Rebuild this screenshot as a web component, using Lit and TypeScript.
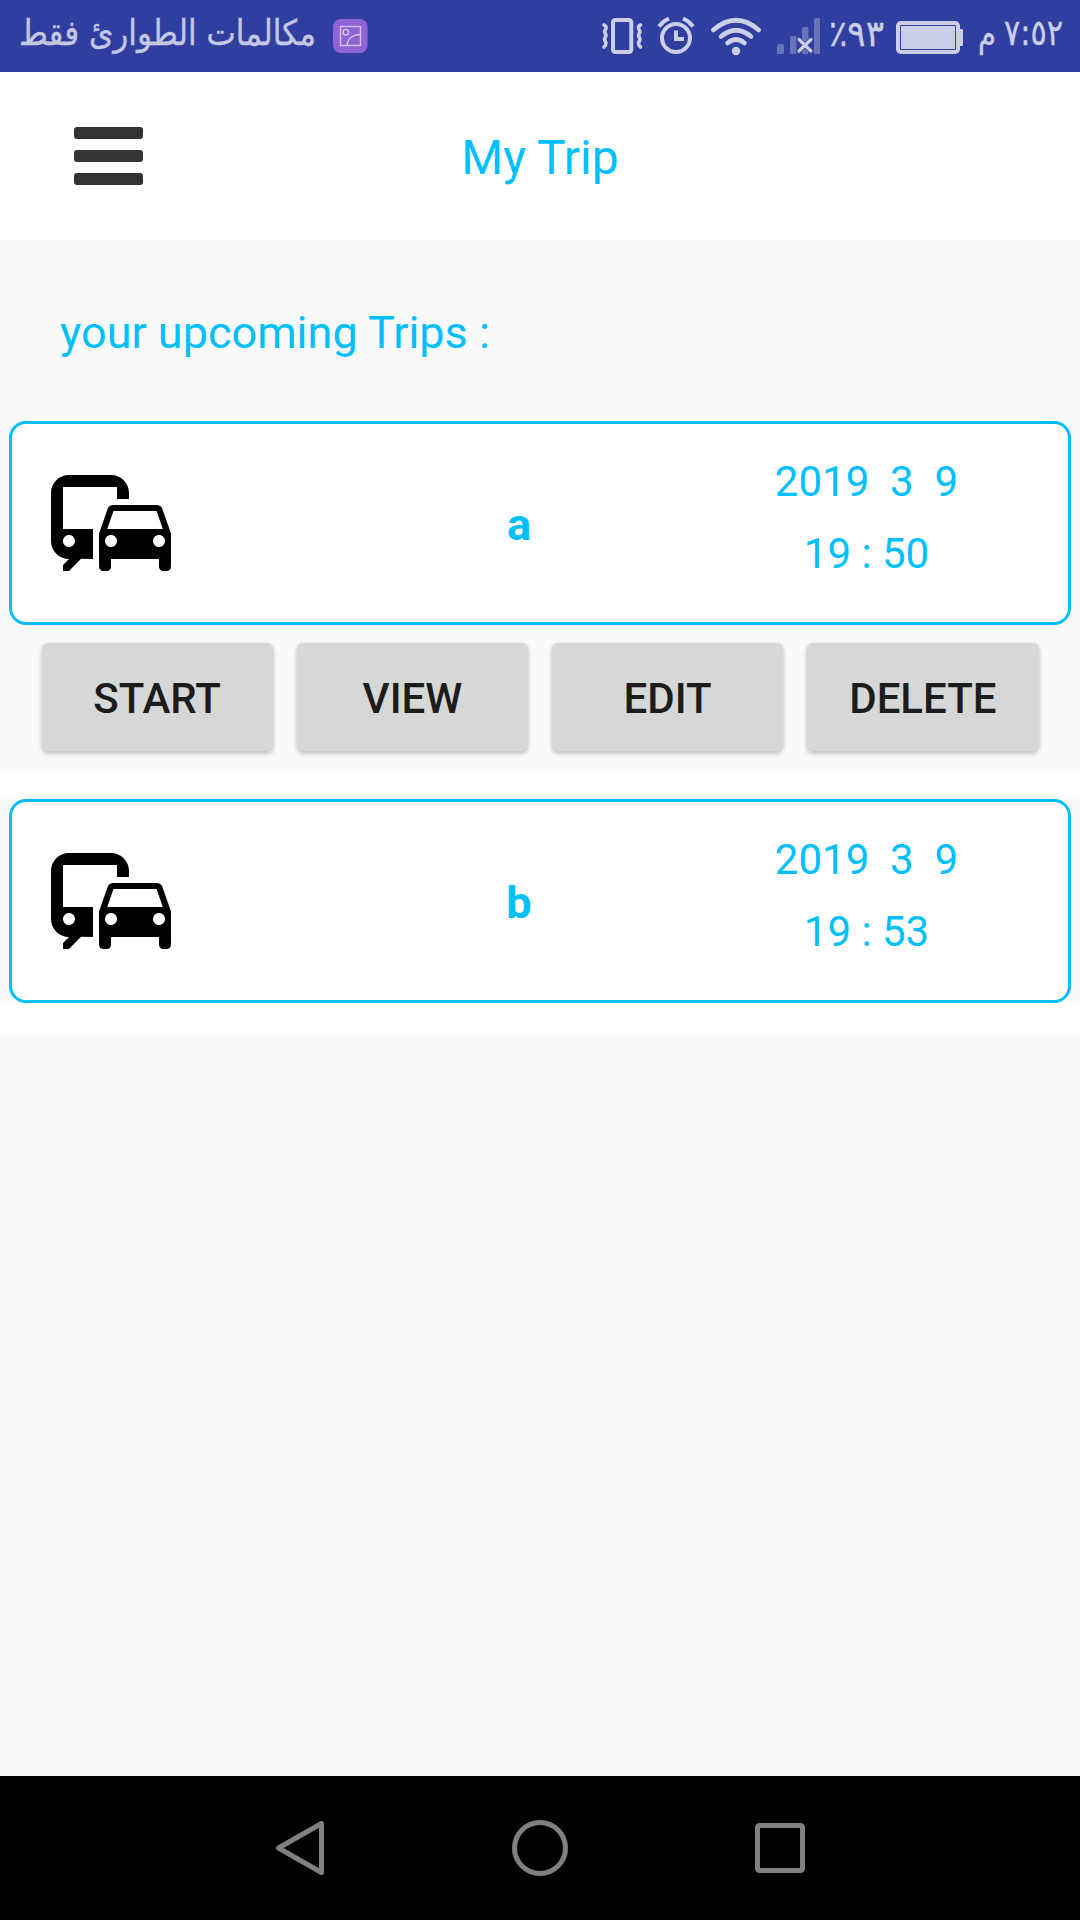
import { LitElement, html, css, svg } from "lit";
import { customElement, property } from "lit/decorators.js";

interface Trip {
  name: string;
  date: string;
  time: string;
}

const TRIPS: Trip[] = [
  { name: "a", date: "2019  3  9", time: "19 : 50" },
  { name: "b", date: "2019  3  9", time: "19 : 53" },
];

const ACTIONS = ["START", "VIEW", "EDIT", "DELETE"];

@customElement("status-bar")
class StatusBar extends LitElement {
  static styles = css`
    :host {
      display: flex;
      flex: none;
      justify-content: space-between;
      height: 72px;
      background: #303f9f;
    }
    svg {
      display: block;
      flex: none;
      overflow: visible;
    }
    .group {
      display: flex;
    }
    .text {
      fill: #cbcfe8;
      stroke: #cbcfe8;
      stroke-width: 0.4;
      font-family: "DejaVu Sans", sans-serif;
      font-size: 36px;
    }
    .carrier {
      direction: rtl;
      fill: #c3c8e5;
      stroke: #c3c8e5;
      font-size: 35px;
    }
    .ltr {
      direction: ltr;
      unicode-bidi: bidi-override;
    }
  `;

  render() {
    return html`
      <div class="group">
        <svg width="333" height="72" viewBox="0 0 333 72">
          <text class="text carrier" x="316" y="45" textLength="297" lengthAdjust="spacingAndGlyphs">مكالمات الطوارئ فقط</text>
        </svg>
        <svg width="35" height="72" viewBox="0 0 35 72">
          <rect x="0" y="19" width="34.500" height="34" rx="8" fill="#8f63d5" />
          <g fill="none" stroke="#d3c6ef" stroke-width="1.400">
            <rect x="7.500" y="26.500" width="20" height="19" />
            <circle cx="12.800" cy="32.200" r="2.800" />
            <path d="M14 45C15 38.500 20 34.500 27 34.500" />
          </g>
        </svg>
      </div>
      <div class="group">
        <svg width="219" height="72" viewBox="602 0 219 72">
          <g fill="none" stroke="#cbcfe8" stroke-width="4">
            <rect x="613" y="20" width="18.300" height="32" rx="2.500" />
            <g stroke-linecap="round" stroke-linejoin="round" stroke-width="3.600">
              <path d="M604 25Q606.500 26 606 28.500L604.500 31.500L606 35.500L604.500 39.500L606 43Q606 45.500 604 47" />
              <path d="M640.500 25Q638 26 638.500 28.500L640 31.500L638.500 35.500L640 39.500L638.500 43Q638.500 45.500 640.500 47" />
            </g>
            <circle cx="676" cy="38" r="14" />
            <path d="M676 30.500V39H684" />
            <path d="M659 26.500Q663 21 669 18.500M693 26.500Q689 21 683 18.500" />
          </g>
          <g fill="none" stroke="#cbcfe8" stroke-width="4.600" stroke-linecap="round">
            <path d="M713.300 30Q736 10.500 758.700 30" />
            <path d="M721 36.500Q736 24 751 36.500" />
            <path d="M727.500 43Q736 36 744.500 43" />
          </g>
          <circle cx="736" cy="51" r="4.200" fill="#cbcfe8" />
          <g fill="#6973b9">
            <rect x="777" y="44" width="7" height="10" rx="1.500" />
            <rect x="790" y="36" width="6.500" height="18" rx="1.500" />
            <rect x="802" y="27" width="6.500" height="27" rx="1.500" />
            <rect x="814" y="18" width="6" height="36" rx="1.500" />
          </g>
          <path d="M799 39.500L811 51M811 39.500L799 51" fill="none" stroke="#303f9f" stroke-width="5" stroke-linecap="round" />
          <path d="M799 39.500L811 51M811 39.500L799 51" fill="none" stroke="#cbcfe8" stroke-width="3.200" stroke-linecap="round" />
        </svg>
        <svg width="75" height="72" viewBox="821 0 75 72">
          <text class="text ltr" x="829" y="46" textLength="55" lengthAdjust="spacingAndGlyphs">٪٩٣</text>
        </svg>
        <svg width="68" height="72" viewBox="896 0 68 72">
          <rect x="898" y="23" width="60" height="29" rx="3" fill="none" stroke="#cbcfe8" stroke-width="4" />
          <rect x="901" y="26" width="54" height="23" fill="#cbcfe8" />
          <path d="M960 29h2q1 0 1 1v15q0 1-1 1h-2z" fill="#cbcfe8" />
        </svg>
        <svg width="116" height="72" viewBox="964 0 116 72">
          <text class="text ltr" x="978" y="45.500" textLength="18" lengthAdjust="spacingAndGlyphs">م</text>
          <text class="text ltr" x="1004" y="45" textLength="59" lengthAdjust="spacingAndGlyphs">٧:٥٢</text>
        </svg>
      </div>
    `;
  }
}

@customElement("trip-card")
class TripCard extends LitElement {
  @property({ attribute: false }) trip!: Trip;

  static styles = css`
    :host {
      display: block;
      padding: 0 9px;
      background: #fafafa;
    }
    .card {
      display: grid;
      grid-template-columns: 370px 274px 418px;
      height: 204px;
      box-sizing: border-box;
      border: 3px solid #00bfff;
      border-radius: 17px;
      background: #fff;
      color: #00bfff;
      font-family: Roboto, sans-serif;
    }
    .icon {
      display: block;
      width: 144px;
      height: 144px;
      margin: 27px 0 0 27px;
    }
    .name {
      padding-top: 74px;
      font-size: 45px;
      line-height: 54px;
      font-weight: 700;
      text-align: center;
    }
    .when {
      display: flex;
      flex-direction: column;
      align-items: center;
      padding: 22px 0 0 3px;
      font-size: 42px;
      line-height: 72px;
      white-space: pre;
    }
  `;

  render() {
    return html`
      <div class="card">
        <svg class="icon" viewBox="0 0 24 24">
          <path
            d="M12 4H5C3.340 4 2 5.340 2 7v8c0 1.660 1.340 3 3 3l-1 1v1h1l2-2.030L9 18v-5H4V5.980L13 6v2h2V7c0-1.660-1.340-3-3-3zM5 14c.55 0 1 .45 1 1s-.45 1-1 1-1-.45-1-1 .45-1 1-1zm15.570-4.340c-.14-.4-.52-.66-.97-.66h-7.190c-.46 0-.83.26-.98.66L10 13.770l.01 5.510c0 .38.31.72.69.72h.62c.38 0 .68-.38.68-.76V18h8v1.240c0 .38.31.76.69.76h.61c.38 0 .69-.34.69-.72l.01-1.370v-4.140l-1.430-4.110zm-8.160.34h7.190l1.030 3h-9.250l1.030-3zM12 16c-.55 0-1-.45-1-1s.45-1 1-1 1 .45 1 1-.45 1-1 1zm8 0c-.55 0-1-.45-1-1s.45-1 1-1 1 .45 1 1-.45 1-1 1z"
          />
        </svg>
        <span class="name">${this.trip.name}</span>
        <div class="when"><span>${this.trip.date}</span><span>${this.trip.time}</span></div>
      </div>
    `;
  }
}

@customElement("nav-bar")
class NavBar extends LitElement {
  static styles = css`
    :host {
      display: flex;
      flex: none;
      align-items: center;
      justify-content: space-between;
      height: 144px;
      padding: 0 264px;
      box-sizing: border-box;
      background: #000;
    }
    svg {
      width: 72px;
      height: 72px;
      fill: none;
      stroke: #808080;
      stroke-width: 5;
      stroke-linejoin: round;
    }
  `;

  render() {
    const shapes = [
      svg`<path d="M57.500 11.500V60.500L14.500 36Z" />`,
      svg`<circle cx="36" cy="36" r="25.500" />`,
      svg`<rect x="13.500" y="13.500" width="45" height="45" rx="2" />`,
    ];
    return shapes.map((shape) => html`<svg viewBox="0 0 72 72">${shape}</svg>`);
  }
}

@customElement("app-root")
class AppRoot extends LitElement {
  static styles = css`
    :host {
      display: flex;
      flex-direction: column;
      width: 1080px;
      height: 1920px;
      background: #fafafa;
      color: #00bfff;
      font-family: Roboto, sans-serif;
    }
    .header {
      display: grid;
      grid-template-columns: 1fr auto 1fr;
      align-items: center;
      flex: none;
      height: 168px;
      background: #fff;
    }
    .menu {
      display: flex;
      flex-direction: column;
      gap: 11px;
      width: 69px;
      margin-left: 73.500px;
    }
    .bar {
      height: 12px;
      border-radius: 3px;
      background: #333;
    }
    .title {
      margin: 4px 0 0;
      font-size: 48px;
      line-height: 56px;
      font-weight: 400;
    }
    .heading {
      margin: 0;
      padding: 66px 60px 61px;
      font-size: 45px;
      line-height: 54px;
      font-weight: 400;
    }
    .actions {
      display: grid;
      grid-template-columns: repeat(4, 1fr);
      gap: 24px;
      padding: 18px 41.500px;
    }
    .action {
      height: 108px;
      padding: 3px 0 0;
      border: 0;
      border-radius: 6px;
      background: #d6d7d7;
      box-shadow: 0 3px 5px rgba(0, 0, 0, 0.2), 0 0 4px rgba(0, 0, 0, 0.08);
      color: #1c1c1c;
      font: 500 42px/49px Roboto, sans-serif;
    }
    .row {
      padding: 30px 0;
      background: #fff;
    }
    .main {
      flex: 1;
    }
  `;

  render() {
    return html`
      <status-bar></status-bar>
      <header class="header">
        <div class="menu">
          <div class="bar"></div>
          <div class="bar"></div>
          <div class="bar"></div>
        </div>
        <h1 class="title">My Trip</h1>
      </header>
      <main class="main">
        <h2 class="heading">your upcoming Trips :</h2>
        <trip-card .trip=${TRIPS[0]}></trip-card>
        <div class="actions">
          ${ACTIONS.map((label) => html`<button class="action">${label}</button>`)}
        </div>
        <div class="row"><trip-card .trip=${TRIPS[1]}></trip-card></div>
      </main>
      <nav-bar></nav-bar>
    `;
  }
}
